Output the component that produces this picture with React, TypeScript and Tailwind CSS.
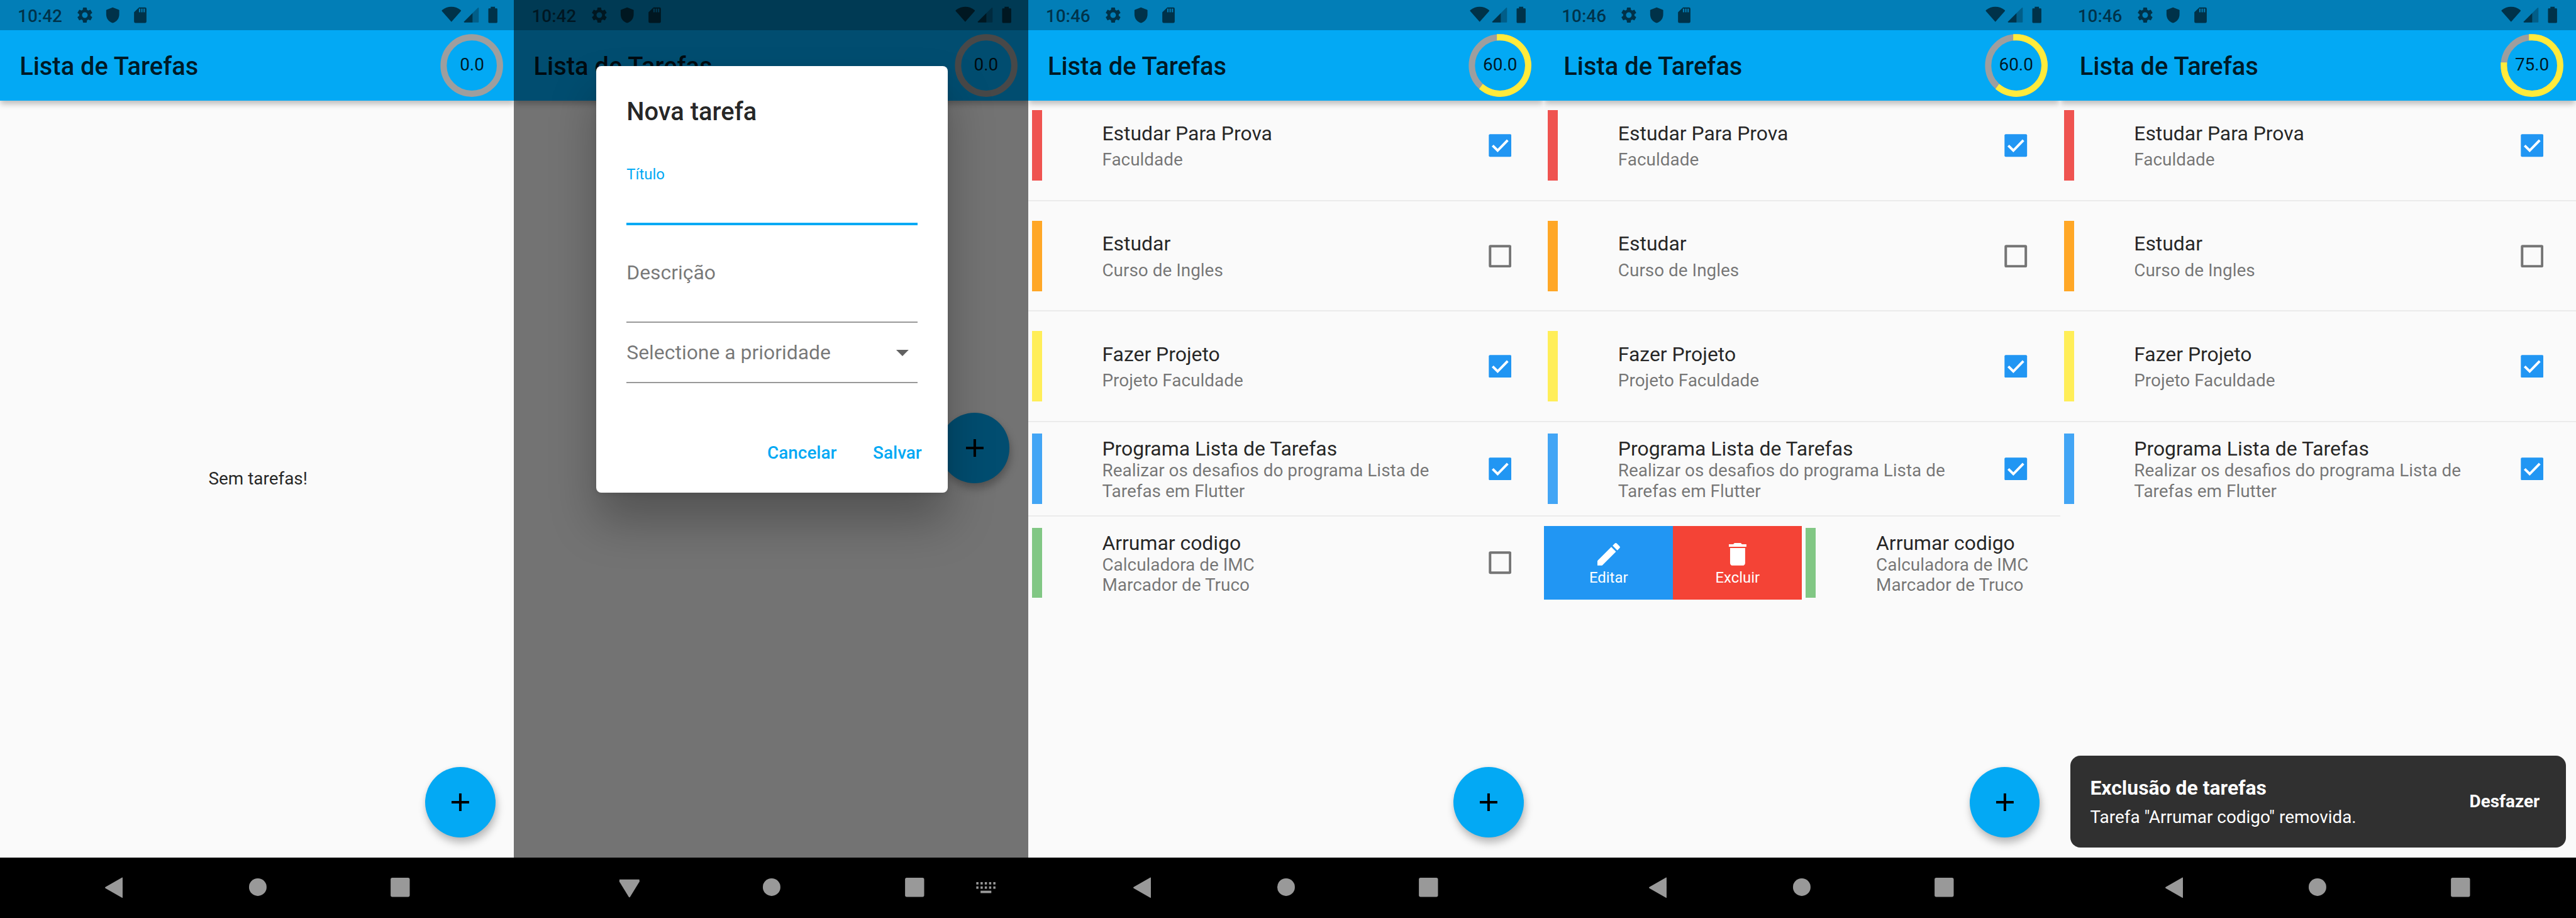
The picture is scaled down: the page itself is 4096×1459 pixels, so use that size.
import React from 'react';

type Task = {
  title: string;
  lines: string[];
  color: string;
  done: boolean;
};

const TASKS: Task[] = [
  { title: 'Estudar Para Prova', lines: ['Faculdade'], color: 'bg-[#ef5350]', done: true },
  { title: 'Estudar', lines: ['Curso de Ingles'], color: 'bg-[#ffa726]', done: false },
  { title: 'Fazer Projeto', lines: ['Projeto Faculdade'], color: 'bg-[#ffee58]', done: true },
  {
    title: 'Programa Lista de Tarefas',
    lines: ['Realizar os desafios do programa Lista de', 'Tarefas em Flutter'],
    color: 'bg-[#42a5f5]',
    done: true,
  },
  {
    title: 'Arrumar codigo',
    lines: ['Calculadora de IMC', 'Marcador de Truco'],
    color: 'bg-[#81c784]',
    done: false,
  },
];

function StatusBar({ time }: { time: string }) {
  return (
    <div className="flex h-[63px] w-[1080px] items-center bg-black/25 pl-[37px] text-black/60">
      <span className="w-[124px] pt-[6px] text-[36.75px] leading-[43px] font-medium">{time}</span>
      <svg className="h-[63px] w-[150px]" viewBox="0 0 150 63" fill="currentColor">
        <g transform="translate(-2.7 11.8) scale(1.642)">
          <path d="M19.14 12.94c.04-.3.06-.61.06-.94 0-.32-.02-.64-.07-.94l2.03-1.58c.18-.14.23-.41.12-.61l-1.92-3.32c-.12-.22-.37-.29-.59-.22l-2.39.96c-.5-.38-1.03-.7-1.62-.94l-.36-2.54c-.04-.24-.24-.41-.48-.41h-3.84c-.24 0-.43.17-.47.41l-.36 2.54c-.59.24-1.13.57-1.62.94l-2.39-.96c-.22-.08-.47 0-.59.22L2.74 8.87c-.12.21-.08.47.12.61l2.03 1.58c-.05.3-.09.63-.09.94s.02.64.07.94l-2.03 1.58c-.18.14-.23.41-.12.61l1.92 3.32c.12.22.37.29.59.22l2.39-.96c.5.38 1.03.7 1.62.94l.36 2.54c.05.24.24.41.48.41h3.84c.24 0 .44-.17.47-.41l.36-2.54c.59-.24 1.13-.56 1.62-.94l2.39.96c.22.08.47 0 .59-.22l1.92-3.32c.12-.22.07-.47-.12-.61l-2.01-1.58zM12 15.6c-1.98 0-3.6-1.62-3.6-3.6s1.62-3.6 3.6-3.6 3.6 1.62 3.6 3.6-1.62 3.6-3.6 3.6z" />
        </g>
        <path d="M75.3 15.6 88 20.3Q89 20.7 89 21.8V30C89 39 83.4 45.8 75.3 48.1 67.2 45.8 61.7 39 61.7 30V21.8Q61.7 20.7 62.7 20.3Z" />
        <path
          fillRule="evenodd"
          d="M130.6 15.4H143Q146 15.4 146 18.4V45Q146 48 143 48H123Q120 48 120 45V25.6ZM130.2 18.2V25.6H133V18.2ZM135 18.2V25.6H137.8V18.2ZM139.8 18.2V25.6H142.6V18.2Z"
        />
      </svg>
      <svg className="ml-[609px] h-[63px] w-[124px]" viewBox="920 0 124 63" fill="currentColor">
        <path d="M944.7 45.7 924.9 23.4Q924 22.2 925.2 21.2C931 16.6 937.5 14.2 944.7 14.2S958.4 16.6 964.2 21.2Q965.4 22.2 964.5 23.4Z" />
        <path d="M989 27.2V47H972.2Q970.4 47 971.3 45Z" />
        <path opacity=".42" d="M989 27.2 1000.3 16Q1002 15 1002 17V45.6Q1002 47 1000.6 47H989Z" />
        <path d="M1027 14H1036V17.6H1039.2Q1041 17.6 1041 19.4V46.2Q1041 48 1039.2 48H1023.8Q1022 48 1022 46.2V19.4Q1022 17.6 1023.8 17.6H1027Z" />
      </svg>
    </div>
  );
}

function ProgressRing({ percent }: { percent: number }) {
  const r = 59;
  const angle = (percent / 100) * 2 * Math.PI;
  const x = 66 + r * Math.sin(angle);
  const y = 66 - r * Math.cos(angle);
  return (
    <div className="relative flex h-[132px] w-[132px] items-center justify-center">
      <svg className="absolute inset-0 h-full w-full" viewBox="0 0 132 132" fill="none" strokeWidth="13.1">
        <circle cx="66" cy="66" r={r} stroke="#9e9e9e" />
        {percent > 0 && (
          <path
            d={`M66 ${66 - r}A${r} ${r} 0 ${percent > 50 ? 1 : 0} 1 ${x} ${y}`}
            stroke="#ffeb3b"
            strokeLinecap="square"
          />
        )}
      </svg>
      <span className="relative text-[36.75px] leading-[43px] text-black/87">{percent.toFixed(1)}</span>
    </div>
  );
}

function AppBar({ time, percent }: { time: string; percent: number }) {
  return (
    <header className="relative z-10 h-[210px] w-[1080px] bg-[#03a9f4] shadow-[0_7px_12px_-1px_rgba(0,0,0,0.26)]">
      <StatusBar time={time} />
      <div className="flex h-[147px] items-center justify-between pr-[26px] pl-[41px]">
        <h1 className="pt-[4px] text-[52.5px] leading-[62px] font-medium text-black/87">Lista de Tarefas</h1>
        <ProgressRing percent={percent} />
      </div>
    </header>
  );
}

function Fab({ raised = false }: { raised?: boolean }) {
  return (
    <button
      className={`absolute left-[890.5px] flex h-[147px] w-[147px] items-center justify-center rounded-full bg-[#03a9f4] shadow-[3px_11px_17px_0px_rgba(0,0,0,0.26),0_0_8px_rgba(0,0,0,0.06)] ${raised ? 'top-[864px]' : 'top-[1605px]'}`}
    >
      <svg className="h-[63px] w-[63px]" viewBox="0 0 24 24" fill="#000">
        <path d="M19 13h-6v6h-2v-6H5v-2h6V5h2v6h6v2z" />
      </svg>
    </button>
  );
}

function NavBar({ keyboard = false }: { keyboard?: boolean }) {
  return (
    <nav className="flex h-[127px] w-[1080px] items-start bg-black pt-[31px] pl-[207px] text-[#999]">
      <svg className="h-[63px] w-[63px]" viewBox="0 0 63 63" fill="currentColor">
        {keyboard ? (
          <path d="M13 16.5Q13 15.5 14 15.5H54Q55 15.5 55 16.5V20L35.4 52Q34 54 32.6 52L13 20Z" />
        ) : (
          <path d="M50 12.2V53Q50 54.4 48.6 53.6L14 34Q12 32.6 14 31.2L48.6 11.6Q50 10.8 50 12.2Z" />
        )}
      </svg>
      <svg className="ml-[238px] h-[63px] w-[63px]" viewBox="0 0 63 63" fill="currentColor">
        <circle cx="31.5" cy="31.5" r="18.4" />
      </svg>
      <svg className="ml-[235px] h-[63px] w-[63px]" viewBox="0 0 63 63" fill="currentColor">
        <rect x="12" y="12" width="40" height="40" rx="3.5" />
      </svg>
      {keyboard && (
        <svg className="ml-[88px] h-[63px] w-[63px]" viewBox="0 0 63 63" fill="currentColor">
          {[11, 19.9, 28.8, 37.7, 46.6].map((x) => (
            <React.Fragment key={x}>
              <rect x={x} y="21" width="4.6" height="5" />
              <rect x={x} y="30" width="4.6" height="5" />
            </React.Fragment>
          ))}
          <rect x="19.9" y="39" width="22.6" height="5" />
        </svg>
      )}
    </nav>
  );
}

function Checkbox({ checked }: { checked: boolean }) {
  return (
    <svg className="h-[48px] w-[48px]" viewBox="0 0 48 48">
      {checked ? (
        <>
          <rect x=".4" y=".4" width="47.25" height="47.25" rx="2.6" fill="#2196f3" />
          <path d="M8.4 24.1 18.9 34.6 39.9 13.1" fill="none" stroke="#fff" strokeWidth="5.25" />
        </>
      ) : (
        <rect x="3" y="3" width="42" height="42" rx="1" fill="none" stroke="#757575" strokeWidth="5.25" />
      )}
    </svg>
  );
}

function TaskTile({ task }: { task: Task }) {
  const tall = task.lines.length > 1;
  return (
    <div className={`flex w-[1080px] shrink-0 items-center pl-[8px] ${tall ? 'h-[155px]' : 'h-[189px]'}`}>
      <div className={`h-[147px] w-[21px] ${task.color}`} />
      <div className={`ml-[126px] flex h-full w-[809px] flex-col whitespace-nowrap ${tall ? 'pt-[10.7px]' : 'pt-[43.7px]'}`}>
        <div className="text-[42px] leading-[50px] text-black/87">{task.title}</div>
        <div className={`text-[36.75px] leading-[42.6px] text-black/54 ${tall ? 'pt-[0.5px]' : 'pt-[10px]'}`}>
          {task.lines.map((l) => (
            <div key={l}>{l}</div>
          ))}
        </div>
      </div>
      <Checkbox checked={task.done} />
    </div>
  );
}

function Divider() {
  return (
    <div className="flex h-[42px] items-center">
      <div className="h-[2.6px] w-full bg-black/6" />
    </div>
  );
}

function SlideAction({ label, color, icon }: { label: string; color: string; icon: string }) {
  return (
    <div className={`flex h-full w-[270px] shrink-0 flex-col items-center pt-[28px] text-white ${color}`}>
      <svg className="h-[63px] w-[63px]" viewBox="0 0 24 24" fill="currentColor">
        <path d={icon} />
      </svg>
      <span className="text-[31.5px] leading-[36px]">{label}</span>
    </div>
  );
}

function TaskList({ tasks, swiped = false }: { tasks: Task[]; swiped?: boolean }) {
  return (
    <div className="flex flex-col">
      {tasks.map((t, i) => (
        <React.Fragment key={t.title}>
          {i > 0 && <Divider />}
          {swiped && i === tasks.length - 1 ? (
            <div className="flex h-[155px] w-[1080px] overflow-hidden">
              <SlideAction
                label="Editar"
                color="bg-[#2196f3]"
                icon="M3 17.25V21h3.75L17.81 9.94l-3.75-3.75L3 17.25zM20.71 7.04c.39-.39.39-1.02 0-1.41l-2.34-2.34c-.39-.39-1.02-.39-1.41 0l-1.83 1.83 3.75 3.75 1.83-1.83z"
              />
              <SlideAction
                label="Excluir"
                color="bg-[#f44336]"
                icon="M6 19c0 1.1.9 2 2 2h8c1.1 0 2-.9 2-2V7H6v12zM19 4h-3.5l-1-1h-5l-1 1H5v2h14V4z"
              />
              <TaskTile task={t} />
            </div>
          ) : (
            <TaskTile task={t} />
          )}
        </React.Fragment>
      ))}
    </div>
  );
}

function NewTaskDialog() {
  return (
    <div className="absolute top-[138.3px] left-[172.5px] flex h-[892.5px] w-[735px] flex-col rounded-[10.5px] bg-white px-[63px] pt-[64.7px] shadow-[0_60px_95px_0px_rgba(0,0,0,0.27),0_4px_12px_0px_rgba(0,0,0,0.08)]">
      <h2 className="text-[52.5px] leading-[62px] font-medium text-black/87">Nova tarefa</h2>
      <label className="mt-[82px] text-[31.5px] leading-[36px] text-[#03a9f4]">Título</label>
      <div className="mt-[83.3px] h-[5.25px] shrink-0 bg-[#03a9f4]" />
      <label className="mt-[74px] text-[42px] leading-[50px] text-black/54">Descrição</label>
      <div className="mt-[77px] h-[2.6px] shrink-0 bg-black/40" />
      <div className="mt-[36.5px] flex items-center justify-between">
        <span className="text-[42px] leading-[50px] text-black/54">Selectione a prioridade</span>
        <svg className="-my-[7px] h-[63px] w-[63px]" viewBox="0 0 24 24" fill="#616161">
          <path d="M7 10l5 5 5-5z" />
        </svg>
      </div>
      <div className="mt-[37px] h-[2.6px] shrink-0 bg-black/40" />
      <div className="mt-[124px] -mr-[9px] flex justify-end gap-[76px] text-[36.75px] leading-[44px] font-medium text-[#03a9f4]">
        <button>Cancelar</button>
        <button>Salvar</button>
      </div>
    </div>
  );
}

function Snackbar() {
  return (
    <div className="absolute top-[1581.2px] left-[21px] z-20 flex h-[191.5px] w-[1038px] items-center justify-between rounded-[21px] bg-[#303030] pr-[55px] pl-[42px] text-white">
      <div className="flex flex-col gap-[14.5px] pt-[1px]">
        <strong className="text-[42px] leading-[50px] font-bold">Exclusão de tarefas</strong>
        <span className="text-[36.75px] leading-[44px]">Tarefa "Arrumar codigo" removida.</span>
      </div>
      <button className="text-[36.75px] leading-[44px] font-bold">Desfazer</button>
    </div>
  );
}

function Phone({
  narrow = false,
  time,
  percent,
  keyboard,
  overlay,
  children,
}: {
  narrow?: boolean;
  time: string;
  percent: number;
  keyboard?: boolean;
  overlay?: React.ReactNode;
  children?: React.ReactNode;
}) {
  return (
    <section
      className={`relative flex h-[1921px] shrink-0 flex-col overflow-hidden bg-[#fafafa] ${narrow ? 'w-[1076px]' : 'w-[1080px]'}`}
    >
      <AppBar time={time} percent={percent} />
      <main className="h-[1584px] w-[1080px] shrink-0">{children}</main>
      {overlay}
      <div className="relative z-30">
        <NavBar keyboard={keyboard} />
      </div>
    </section>
  );
}

export default function App() {
  return (
    <div className="h-[1459px] w-[4096px] overflow-hidden bg-black">
      <div className="flex h-[1921px] w-[5392px] font-['Roboto',sans-serif] [zoom:0.759644]">
        <Phone narrow time="10:42" percent={0}>
          <div className="flex h-full items-center justify-center text-[36.75px] leading-[43px] text-black/87">
            Sem tarefas!
          </div>
          <Fab />
        </Phone>
        <Phone
          narrow
          keyboard
          time="10:42"
          percent={0}
          overlay={
            <div className="absolute inset-0 z-20 bg-black/54">
              <NewTaskDialog />
            </div>
          }
        >
          <Fab raised />
        </Phone>
        <Phone time="10:46" percent={60}>
          <TaskList tasks={TASKS} />
          <Fab />
        </Phone>
        <Phone time="10:46" percent={60}>
          <TaskList tasks={TASKS} swiped />
          <Fab />
        </Phone>
        <Phone time="10:46" percent={75} overlay={<Snackbar />}>
          <TaskList tasks={TASKS.slice(0, 4)} />
          <Fab />
        </Phone>
      </div>
    </div>
  );
}
